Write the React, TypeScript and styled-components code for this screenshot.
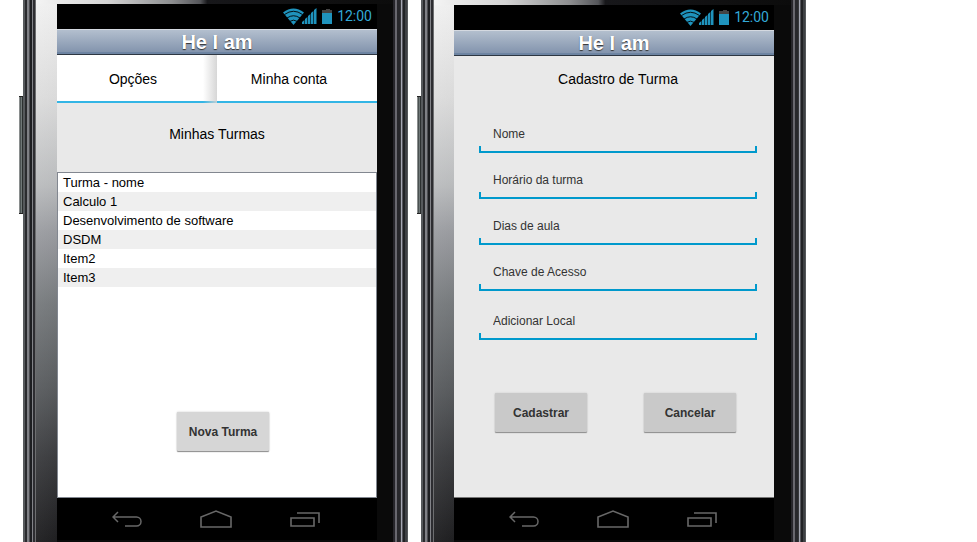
import React from "react";
import styled, { createGlobalStyle } from "styled-components";

const GlobalStyle = createGlobalStyle`
  * { box-sizing: border-box; }
  body { margin: 0; background: #fff; font-family: "Liberation Sans", Arial, sans-serif; color: #000; }
  h1, h2, p, ul { margin: 0; padding: 0; font-weight: normal; }
`;

const Board = styled.main`
  display: grid;
  grid-template-columns: repeat(2, minmax(0, 389px));
  column-gap: 9px;
  min-height: 100vh;
  padding-left: 19px;
`;

const Phone = styled.section`
  display: grid;
  grid-template-columns: 4px 13px minmax(0, 1fr) 15px;
`;

const VolumeKey = styled.div`
  height: 118px;
  margin-top: 96px;
  border-top: 1px solid #222;
  border-bottom: 1px solid #222;
  background: linear-gradient(90deg, #8a8e8e 0 1px, #4b5252 1px 2px, #6f7777 2px 3px, #2c3030 3px);
`;

const LeftRail = styled.div`
  background: linear-gradient(
    90deg,
    #56595c 0 2px, #2a2b2e 2px 4px, #7f8085 4px 6px, #4c4d51 6px 7px,
    #1d1e21 7px 9px, #828388 9px 10px, #2d2d31 10px 12px, #6d6e70 12px
  );
`;

const RightRail = styled.div`
  background: linear-gradient(
    90deg,
    #26252a 0 2px, #69686f 2px 4px, #28282c 4px 7px, #37383b 7px 8px,
    #a5a7b3 8px 9px, #55565c 9px 10px, #222326 10px 12px, #3e4144 12px 14px, #55585b 14px
  );
`;

const Bezel = styled.div<{ $top: number; $left: number; $right: number }>`
  display: flex;
  padding: ${(p) => p.$top}px ${(p) => p.$right}px 2px ${(p) => p.$left}px;
  background:
    linear-gradient(90deg, #f4f4f4, #d4d4d4 20%, #8d8e90 38%, #55565a 46%, #17171a 48%, #0c0c0c) top / 100% ${(p) => p.$top}px no-repeat,
    linear-gradient(100deg, rgba(255, 255, 255, 0.2), rgba(0, 0, 0, 0.06)) left / ${(p) => p.$left}px 100% no-repeat,
    linear-gradient(180deg, #efefef, #d9d9d9 18%, #b6b8ba 34%, #93959a 43%, #707477 56%, #54575a 72%, #3a3b3e 84%, #202022) left / ${(p) => p.$left}px 100% no-repeat,
    #0a0a0a;
`;

const Screen = styled.div`
  display: flex;
  flex-direction: column;
  flex: 1;
  min-width: 0;
  background: #e9e9e9;
`;

const StatusBar = styled.div`
  display: flex;
  align-items: center;
  justify-content: flex-end;
  height: 25px;
  padding-right: 5px;
  background: #000;
  color: #33a9d6;
  font: 14px/25px Roboto, sans-serif;
`;

const StatusIcons = styled.svg`
  display: block;
  margin-right: 4px;
`;

const TitleBar = styled.h1`
  height: 26px;
  border-top: 1px solid #d4d9e0;
  border-bottom: 1px solid #2d3642;
  background: linear-gradient(#b3bfce, #8495ae 90%, #6d84a2 92%);
  color: #fff;
  font-size: 20px;
  font-weight: bold;
  line-height: 24px;
  text-align: center;
  text-shadow: 0 1px 1px #333;
`;

const Tabs = styled.nav`
  display: grid;
  grid-template-columns: 1fr 1fr;
`;

const Tab = styled.button<{ $inset: number; $shade?: boolean }>`
  height: 48px;
  padding: 0 ${(p) => p.$inset}px 0 0;
  border: 0;
  background:
    ${(p) => (p.$shade ? "linear-gradient(90deg, rgba(215, 215, 215, 0), rgba(210, 210, 210, 0.9)) right / 14px 100% no-repeat," : "")}
    linear-gradient(#33b5e5, #33b5e5) bottom / 100% 2px no-repeat,
    #fff;
  color: #000;
  font: 14px/20px "Liberation Sans", Arial, sans-serif;
`;

const Heading = styled.h2`
  padding: 21px 0 28px;
  font-size: 14px;
  line-height: 20px;
  text-align: center;
`;

const FormHeading = styled(Heading)`
  padding: 13px 0 28px 8px;
`;

const ListPanel = styled.div`
  display: flex;
  flex-direction: column;
  justify-content: space-between;
  flex: 1;
  border: 1px solid #828790;
  background: #fff;
`;

const ClassList = styled.ul`
  list-style: none;
`;

const ClassItem = styled.li`
  padding-left: 5px;
  font-size: 13px;
  line-height: 19px;
  &:nth-child(even) { background: #efefef; }
`;

const PanelActions = styled.div`
  display: flex;
  justify-content: center;
  padding: 16px 0 46px 12px;
`;

const Button = styled.button<{ $light?: boolean }>`
  width: 92px;
  height: 39px;
  padding: 0;
  border: 0;
  border-radius: 1px;
  background: ${(p) => (p.$light ? "#d6d6d6" : "#c9c9c9")};
  box-shadow: 0 1px 1px #8c8c8c, 0 0 2px #c4c4c4;
  color: #333;
  font: bold 12px/16px "Liberation Sans", Arial, sans-serif;
`;

const Form = styled.form`
  display: flex;
  flex-direction: column;
  flex: 1;
  gap: 13px;
  padding: 0 17px 0 25px;
  border-bottom: 1px solid #777;
`;

const FieldGroup = styled.div`
  display: flex;
  flex-direction: column;
  gap: 10px;
`;

const Field = styled.input`
  width: 100%;
  height: 36px;
  padding: 0 14px 3px;
  border: 0;
  outline: 0;
  background:
    linear-gradient(#0099cc, #0099cc) bottom / 100% 2px no-repeat,
    linear-gradient(#0099cc, #0099cc) left bottom / 2px 7px no-repeat,
    linear-gradient(#0099cc, #0099cc) right bottom / 2px 7px no-repeat;
  color: #333;
  font: 12px/16px "Liberation Sans", Arial, sans-serif;
  &::placeholder { color: #333; opacity: 1; }
`;

const FormActions = styled.div`
  display: flex;
  justify-content: center;
  gap: 57px;
  padding: 40px 5px 0 0;
`;

const NavBar = styled.nav`
  display: flex;
  align-items: center;
  justify-content: center;
  gap: 58px;
  height: 42px;
  padding-right: 2px;
  background: #000;
`;

const NavButton = styled.button`
  display: flex;
  padding: 0;
  border: 0;
  background: none;
  color: #686868;
`;

function Status() {
  return (
    <StatusBar>
      <StatusIcons width="50" height="17" viewBox="0 0 50 17" fill="#1f93bd" aria-hidden="true">
        <path d="M0 4.500Q10.500 -3.500 21 4.500L10.500 17Z" />
        <path d="M1.500 6.500Q10.500 0 19.500 6.500M4 10Q10.500 5.500 17 10M7 13.300Q10.500 11 14 13.300" fill="none" stroke="#000" strokeWidth="0.900" />
        <path d="M19 16v-2l2.400-2v4zM22 16v-5l2.400-2v7zM25 16V8l2.400-2v10zM28 16V5l2.400-2v13zM31 16V2l2.500-2v16z" />
        <path d="M43 1h4v1h2v3H39V2h4z" fill="#444" />
        <path d="M39 5h10v11H39z" />
      </StatusIcons>
      <time>12:00</time>
    </StatusBar>
  );
}

function SystemNav() {
  return (
    <NavBar aria-label="Sistema">
      <NavButton aria-label="Voltar">
        <svg width="30" height="18" viewBox="0 0 30 18" fill="none" stroke="currentColor" strokeWidth="1.500">
          <path d="M6 2L1 7l5 5M1 7h23.500a4.500 4.500 0 0 1 0 9H13" />
        </svg>
      </NavButton>
      <NavButton aria-label="Início">
        <svg width="32" height="18" viewBox="0 0 32 18" fill="none" stroke="currentColor" strokeWidth="1.600">
          <path d="M1 17V7L16 1l15 6v10z" />
        </svg>
      </NavButton>
      <NavButton aria-label="Recentes">
        <svg width="30" height="18" viewBox="0 0 30 18" fill="none" stroke="currentColor" strokeWidth="1.600">
          <path d="M1 8h23v8H1zM7 3h22v10" />
        </svg>
      </NavButton>
    </NavBar>
  );
}

interface DeviceProps {
  top: number;
  left: number;
  right: number;
  children: React.ReactNode;
}

function Device({ top, left, right, children }: DeviceProps) {
  return (
    <Phone>
      <VolumeKey />
      <LeftRail />
      <Bezel $top={top} $left={left} $right={right}>
        <Screen>
          <Status />
          <TitleBar>He I am</TitleBar>
          {children}
          <SystemNav />
        </Screen>
      </Bezel>
      <RightRail />
    </Phone>
  );
}

const classes = ["Turma - nome", "Calculo 1", "Desenvolvimento de software", "DSDM", "Item2", "Item3"];
const details = ["Nome", "Horário da turma", "Dias de aula", "Chave de Acesso"];

export default function App() {
  return (
    <>
      <GlobalStyle />
      <Board>
        <Device top={4} left={21} right={16}>
          <Tabs>
            <Tab $inset={8} $shade>Opções</Tab>
            <Tab $inset={16}>Minha conta</Tab>
          </Tabs>
          <Heading>Minhas Turmas</Heading>
          <ListPanel>
            <ClassList>
              {classes.map((name) => (
                <ClassItem key={name}>{name}</ClassItem>
              ))}
            </ClassList>
            <PanelActions>
              <Button $light>Nova Turma</Button>
            </PanelActions>
          </ListPanel>
        </Device>
        <Device top={5} left={20} right={17}>
          <FormHeading>Cadastro de Turma</FormHeading>
          <Form onSubmit={(e) => e.preventDefault()}>
            <FieldGroup>
              {details.map((name) => (
                <Field key={name} aria-label={name} placeholder={name} />
              ))}
            </FieldGroup>
            <Field aria-label="Adicionar Local" placeholder="Adicionar Local" />
            <FormActions>
              <Button type="submit">Cadastrar</Button>
              <Button type="button">Cancelar</Button>
            </FormActions>
          </Form>
        </Device>
      </Board>
    </>
  );
}
